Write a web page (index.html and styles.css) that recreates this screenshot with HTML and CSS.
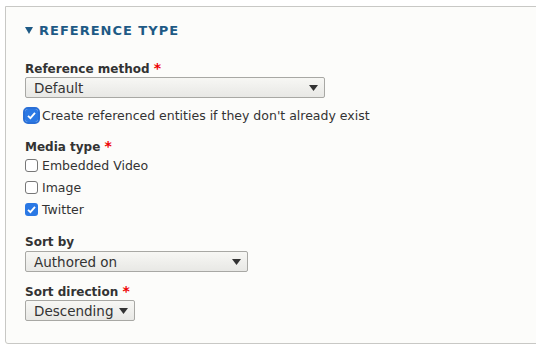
FILE: index.html
```html
<!DOCTYPE html>
<html lang="en">

<head>
    <meta charset="UTF-8">
    <meta name="viewport" content="width=device-width, initial-scale=1.0">
    <title>Reference type</title>
    <link rel="stylesheet" href="styles.css">
</head>

<body>
    <fieldset class="details">
        <div class="summary">
            <span class="summary-arrow"></span>
            <span>Reference type</span>
        </div>

        <div class="form-item">
            <label class="form-label">Reference method <span class="required">*</span></label>
            <div class="select select-wide">
                <span>Default</span>
                <svg class="select-arrow" width="9" height="6" viewBox="0 0 9 6"><path d="M0 0h9L4.5 6z" fill="#333"/></svg>
            </div>
        </div>

        <div class="checkbox-row focused">
            <span class="checkbox checked">
                <svg width="13" height="13" viewBox="0 0 13 13"><path d="M3 6.8l2.4 2.4L10 3.8" fill="none" stroke="#fff" stroke-width="1.8"/></svg>
            </span>
            <span>Create referenced entities if they don't already exist</span>
        </div>

        <div class="form-item media-type">
            <label class="form-label">Media type <span class="required">*</span></label>
            <div class="checkbox-row">
                <span class="checkbox"></span>
                <span>Embedded Video</span>
            </div>
            <div class="checkbox-row">
                <span class="checkbox"></span>
                <span>Image</span>
            </div>
            <div class="checkbox-row">
                <span class="checkbox checked">
                    <svg width="13" height="13" viewBox="0 0 13 13"><path d="M3 6.8l2.4 2.4L10 3.8" fill="none" stroke="#fff" stroke-width="1.8"/></svg>
                </span>
                <span>Twitter</span>
            </div>
        </div>

        <div class="form-item sort-by">
            <label class="form-label">Sort by</label>
            <div class="select select-medium">
                <span>Authored on</span>
                <svg class="select-arrow" width="9" height="6" viewBox="0 0 9 6"><path d="M0 0h9L4.5 6z" fill="#333"/></svg>
            </div>
        </div>

        <div class="form-item sort-direction">
            <label class="form-label">Sort direction <span class="required">*</span></label>
            <div class="select select-small">
                <span>Descending</span>
                <svg class="select-arrow" width="9" height="6" viewBox="0 0 9 6"><path d="M0 0h9L4.5 6z" fill="#333"/></svg>
            </div>
        </div>
    </fieldset>
</body>

</html>
```

FILE: styles.css
```css
* {
    margin: 0;
    padding: 0;
    box-sizing: border-box;
}

body {
    font-family: 'DejaVu Sans', sans-serif;
    font-size: 12px;
    color: #333;
    background-color: #fff;
    overflow: hidden;
}

.details {
    margin: 6px 0 0 5px;
    width: 560px;
    height: 338px;
    border: 1px solid #c8c8c5;
    border-radius: 0 0 0 3px;
    background-color: #fcfcfa;
    padding: 0 0 0 19px;
}

.summary {
    display: flex;
    align-items: center;
    gap: 6px;
    margin-top: 16px;
    height: 14px;
    font-size: 13px;
    font-weight: bold;
    letter-spacing: 1px;
    text-transform: uppercase;
    color: #1e5a85;
}

.summary-arrow {
    width: 0;
    height: 0;
    border-left: 4px solid transparent;
    border-right: 4px solid transparent;
    border-top: 7px solid #1e5a85;
}

.form-item {
    margin-top: 22px;
}

.form-label {
    display: block;
    font-weight: bold;
    line-height: 18px;
    height: 18px;
}

.required {
    color: #e00;
    font-size: 14px;
}

.select {
    display: flex;
    align-items: center;
    justify-content: space-between;
    height: 21px;
    padding: 0 6px 0 8px;
    border: 1px solid #a8a8a4;
    border-radius: 2px;
    background: linear-gradient(#f7f7f4, #e8e8e5);
    font-size: 13.5px;
}

.select-wide {
    width: 300px;
}

.select-medium {
    width: 223px;
}

.select-small {
    width: 110px;
}

.checkbox-row {
    display: flex;
    align-items: center;
    gap: 4px;
    height: 22px;
    font-size: 12.5px;
}

.focused {
    margin-top: 7px;
    height: 20px;
}

.checkbox {
    width: 13px;
    height: 13px;
    border: 1px solid #777;
    border-radius: 3px;
    background-color: #fff;
    display: flex;
}

.checkbox.checked {
    border: none;
    background-color: #2a78e4;
}

.focused .checkbox {
    outline: 2px solid #2a6fd6;
    outline-offset: 0;
}

.media-type {
    margin-top: 12px;
}

.media-type .form-label {
    height: 17px;
}

.sort-by {
    margin-top: 13px;
}

.sort-direction {
    margin-top: 10px;
}
```
